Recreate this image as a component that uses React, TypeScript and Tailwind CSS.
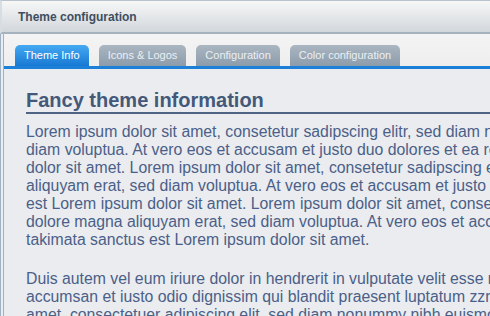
const para1 = [
  'Lorem ipsum dolor sit amet, consetetur sadipscing elitr, sed diam nonumy eirmod tempor invidunt ut labore et dolore magna aliquyam erat, sed',
  'diam voluptua. At vero eos et accusam et justo duo dolores et ea rebum. Stet clita kasd gubergren, no sea takimata sanctus est Lorem ipsum',
  'dolor sit amet. Lorem ipsum dolor sit amet, consetetur sadipscing elitr, sed diam nonumy eirmod tempor invidunt ut labore et dolore magna',
  'aliquyam erat, sed diam voluptua. At vero eos et accusam et justo duo dolores et ea rebum. Stet clita kasd gubergren, no sea takimata sanctus',
  'est Lorem ipsum dolor sit amet. Lorem ipsum dolor sit amet, consetetur sadipscing elitr, sed diam nonumy eirmod tempor invidunt ut labore et',
  'dolore magna aliquyam erat, sed diam voluptua. At vero eos et accusam et justo duo dolores et ea rebum. Stet clita kasd gubergren, no sea',
  'takimata sanctus est Lorem ipsum dolor sit amet.',
]

const para2 = [
  'Duis autem vel eum iriure dolor in hendrerit in vulputate velit esse molestie consequat, vel illum dolore eu feugiat nulla facilisis at vero eros et',
  'accumsan et iusto odio dignissim qui blandit praesent luptatum zzril delenit augue duis dolore te feugait nulla facilisi. Lorem ipsum dolor sit',
  'amet, consectetuer adipiscing elit, sed diam nonummy nibh euismod tincidunt ut laoreet dolore magna aliquam erat volutpat.',
]

const tabs = ['Theme Info', 'Icons & Logos', 'Configuration', 'Color configuration']

export default function App() {
  return (
    <div
      className="w-[490px] h-[316px] overflow-hidden bg-[#ebecef] flex flex-col"
      style={{ fontFamily: '"Liberation Sans", Arial, sans-serif' }}
    >
      {/* panel header */}
      <div className="h-[34px] shrink-0 border-t border-[#b8c2cc] border-l-2 border-l-[#d6dde3] border-b-2 border-b-[#a6b3bf] bg-gradient-to-b from-[#f7f7f7] to-[#d2d7dc] flex items-center pl-[16px]">
        <span className="text-[12px] font-bold text-[#3e4e60]">Theme configuration</span>
      </div>

      <div className="flex-1 flex flex-col border-l-[4px] border-double border-l-[#9fb1c4] min-h-0">
        {/* tab strip */}
        <div className="h-[35px] shrink-0 bg-gradient-to-b from-[#f4f4f4] to-[#eeeeee] flex items-end gap-[10px] pl-[11px] border-b-[3px] border-b-[#1c7fd8]">
          {tabs.map((t, i) => (
            <div
              key={t}
              className={
                i === 0
                  ? 'h-[21px] px-[9px] rounded-t-[5px] bg-gradient-to-b from-[#45a9f2] to-[#1679d3] text-white text-[11px] flex items-center'
                  : 'h-[21px] px-[9px] rounded-t-[5px] bg-gradient-to-b from-[#aab6c1] to-[#8d9cab] text-[#eaf0f5] text-[11px] flex items-center'
              }
            >
              {t}
            </div>
          ))}
        </div>

        {/* content */}
        <div className="flex-1 pl-[22px] pt-[20px] min-h-0">
          <h1 className="text-[20px] leading-[23px] font-bold text-[#44597a] border-b-2 border-[#4f6484] whitespace-nowrap">
            Fancy theme information
          </h1>
          <div className="mt-[9px] text-[15.8px] leading-[18px] text-[#4a6088] whitespace-nowrap">
            {para1.map((l) => (
              <div key={l}>{l}</div>
            ))}
            <div className="h-[21px]" />
            {para2.map((l) => (
              <div key={l}>{l}</div>
            ))}
          </div>
        </div>
      </div>
    </div>
  )
}
